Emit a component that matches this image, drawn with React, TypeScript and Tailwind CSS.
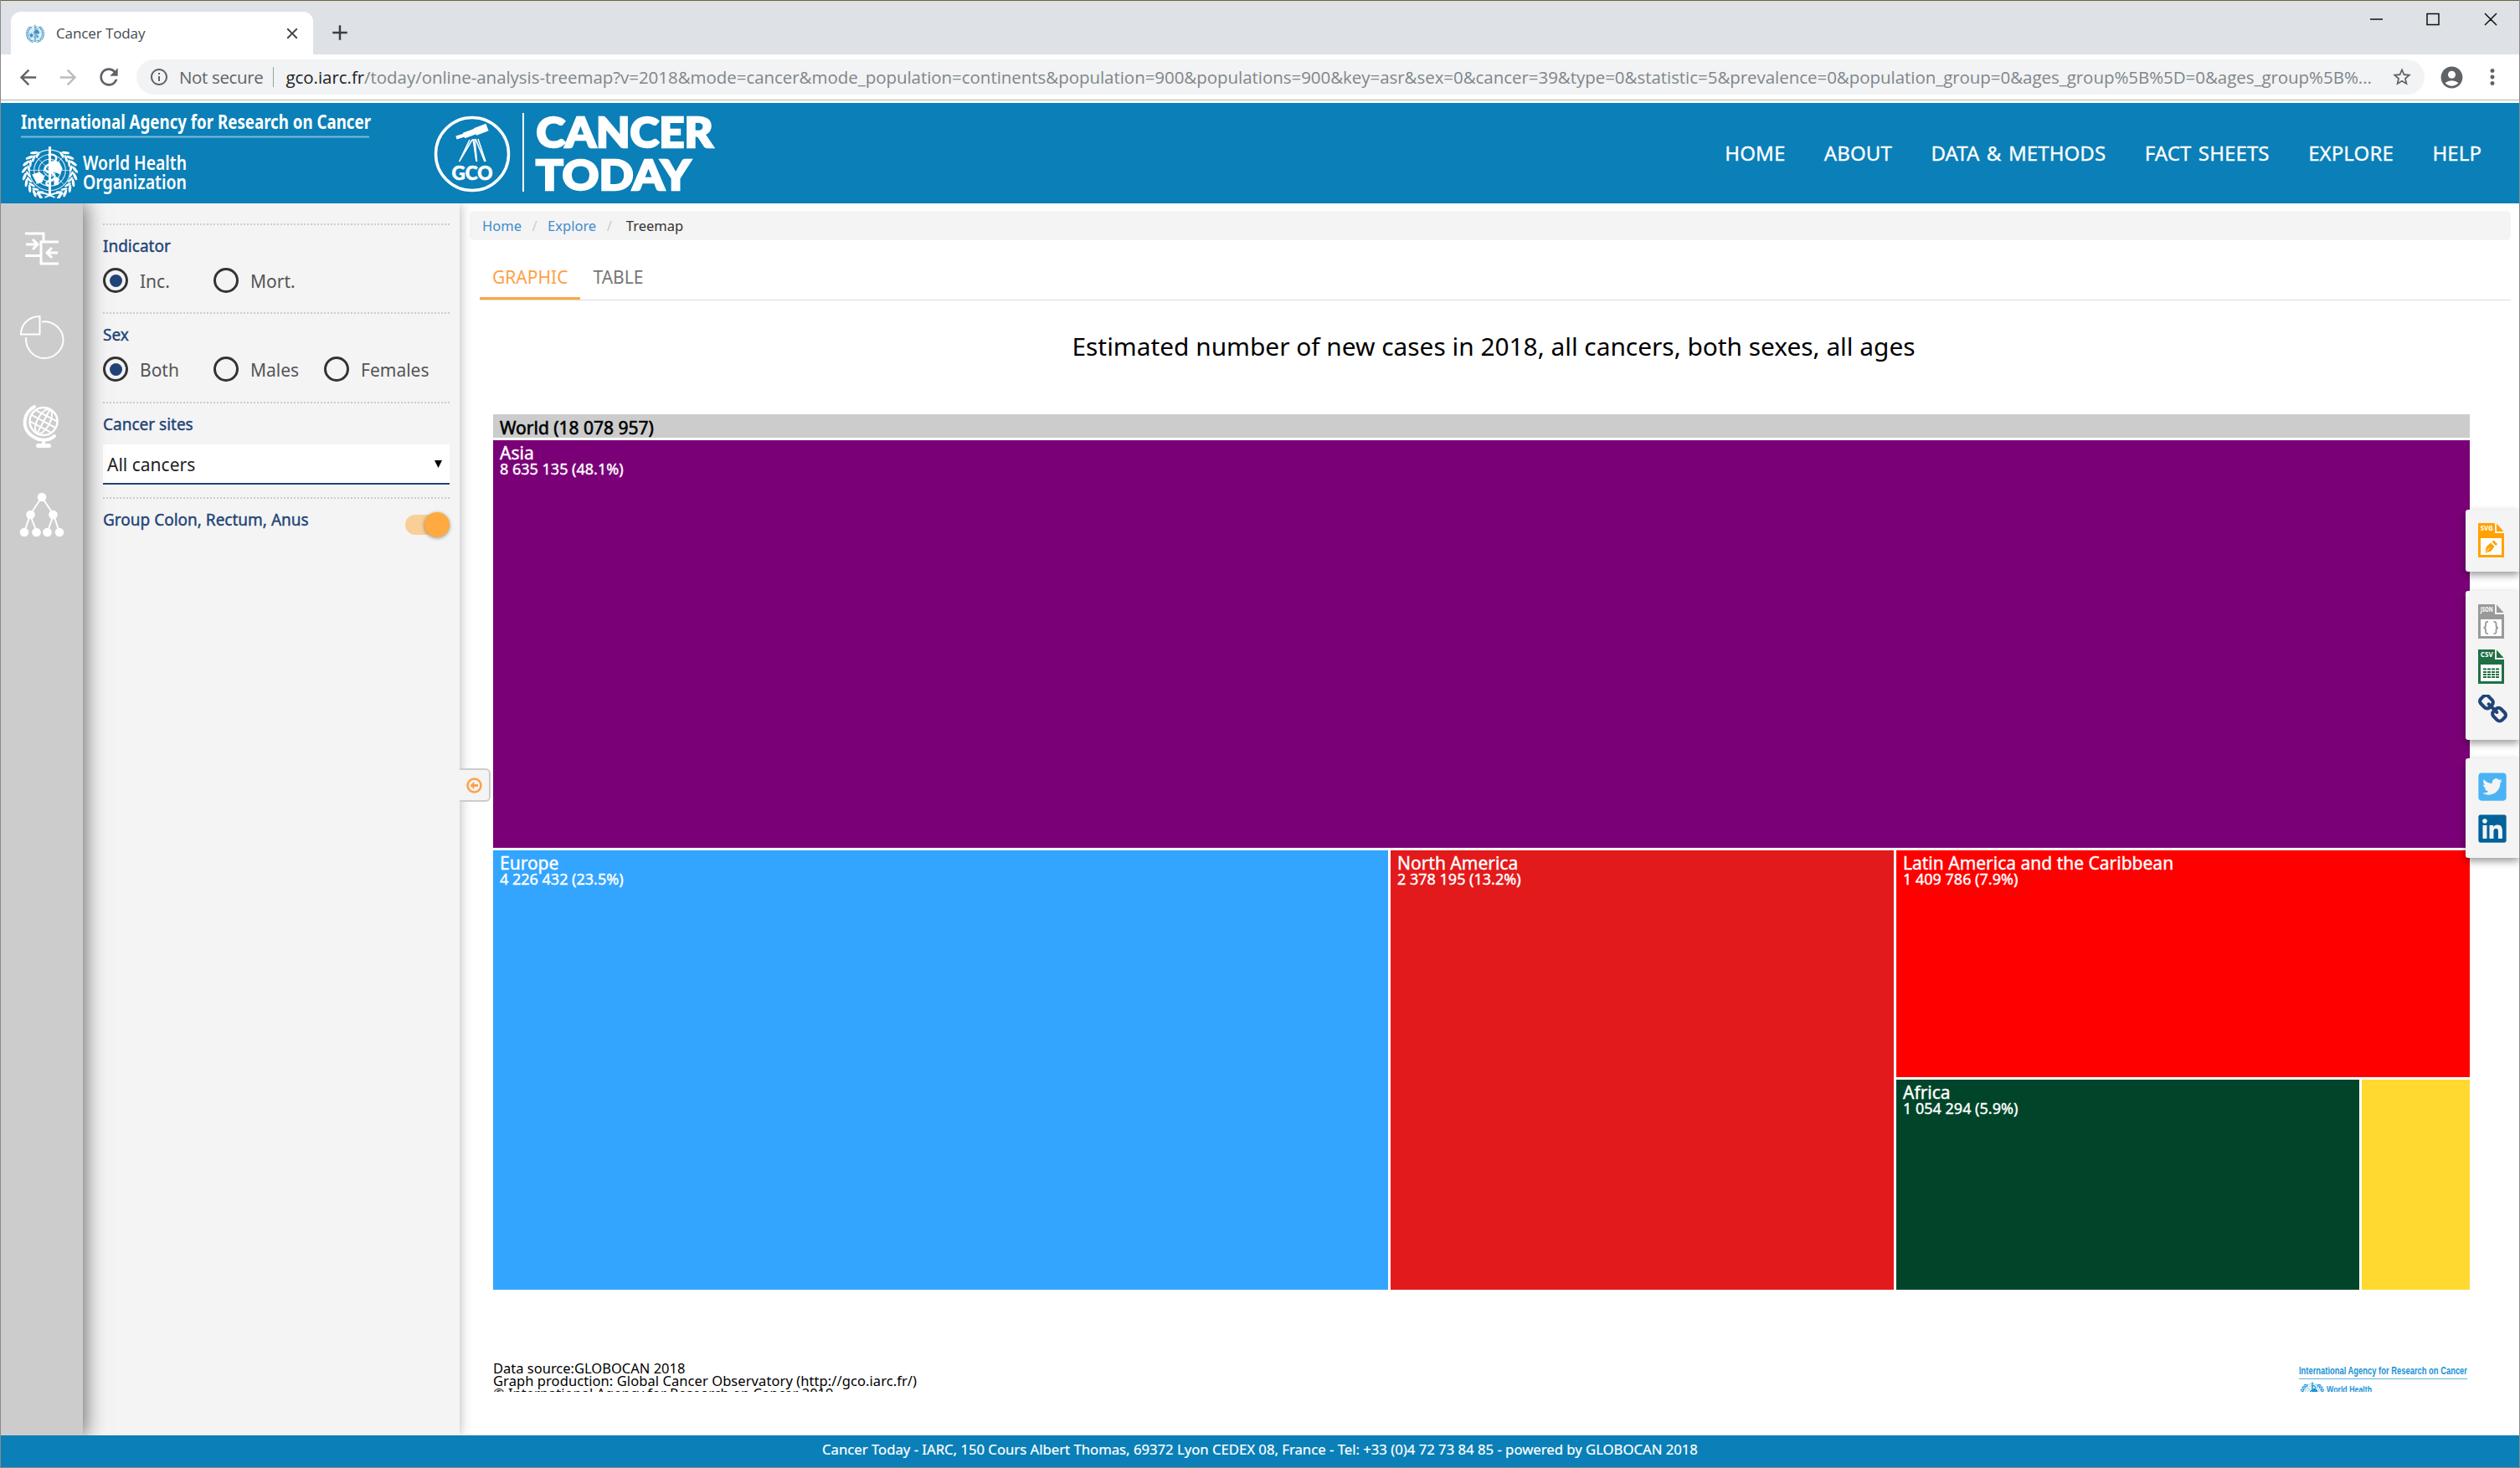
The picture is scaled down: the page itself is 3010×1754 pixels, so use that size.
import React from "react";
import { MdArrowBack, MdArrowForward, MdRefresh, MdStarBorder, MdAccountCircle, MdMoreVert, MdInfoOutline, MdClose, MdAdd } from "react-icons/md";
import { FaTwitterSquare, FaLinkedin } from "react-icons/fa";

const URL_PATH =
  "/today/online-analysis-treemap?v=2018&mode=cancer&mode_population=continents&population=900&populations=900&key=asr&sex=0&cancer=39&type=0&statistic=5&prevalence=0&population_group=0&ages_group%5B%5D=0&ages_group%5B%...";

function Emblem({ className }: { className: string }) {
  const leaves = Array.from({ length: 9 }, (_, i) => 38 + i * 15);
  return (
    <svg viewBox="-35 -32 70 62" className={className} fill="none" stroke="currentColor">
      {[7, 13, 18.5, 24].map((r) => (
        <circle key={r} r={r} cy="-3" strokeWidth="1.1" opacity="0.85" />
      ))}
      <path d="M-24 -3H24M-17 -20L17 14M17 -20L-17 14" strokeWidth="0.9" opacity="0.7" />
      <path d="M-21 2l9-3 6 5-3 7-6 2zM2-14l9 1 4 8-3 7-6-3-5 2-3-8zM5 5l6 1-1 8-5 1z" fill="currentColor" stroke="none" />
      <path d="M0 -31V26" strokeWidth="3" />
      <path d="M-2 -21C9 -24 11 -14 2 -11C-8 -8 -8 -2 1 0C8 2 7 8 0 9C-6 11 -5 15 1 16" strokeWidth="2.4" />
      {leaves.map((a) => (
        <g key={a}>
          <g transform={`rotate(${a}) translate(0 -30)`}>
            <ellipse rx="4.8" ry="1.6" transform="rotate(-32)" fill="currentColor" stroke="none" />
            <ellipse rx="4.2" ry="1.3" cy="5" transform="rotate(22)" fill="currentColor" stroke="none" />
          </g>
          <g transform={`rotate(${-a}) translate(0 -30)`}>
            <ellipse rx="4.8" ry="1.6" transform="rotate(32)" fill="currentColor" stroke="none" />
            <ellipse rx="4.2" ry="1.3" cy="5" transform="rotate(-22)" fill="currentColor" stroke="none" />
          </g>
        </g>
      ))}
      <path d="M-16 25C-8 22 -3 25 6 29M16 25C8 22 3 25 -6 29" strokeWidth="1.8" />
    </svg>
  );
}

function BrowserBar() {
  return (
    <div className="h-[123px] shrink-0 border-t border-[#6b6337] bg-white font-['Open_Sans','Noto_Sans',sans-serif]">
      <div className="flex h-16 bg-[#dee1e6]">
        <div className="mt-[13px] ml-3 flex h-[51px] w-[361px] items-center rounded-t-xl bg-white pr-[14px] pl-[17px] text-[#45494d]">
          <Emblem className="h-6 w-6 text-[#3c93c4]" />
          <span className="ml-[13px] text-[17px] tracking-[-0.1px]">Cancer Today</span>
          <MdClose className="ml-auto size-[22px] text-[#3c4043]" />
        </div>
        <MdAdd className="mt-[23px] ml-[17px] size-[30px] text-[#3c4043]" />
        <svg className="mt-3 mr-[23px] ml-auto h-[22px] w-[158px]" viewBox="0 0 158 22" fill="none" stroke="#111" strokeWidth="1.5">
          <path d="M3 10H18M71 3.500H85V16.500H71ZM140 3L154 17M154 3L140 17" />
        </svg>
      </div>
      <div className="flex h-[55px] items-center border-b border-[#b6b6b6] text-[#5f6368]">
        <MdArrowBack className="ml-[18px] size-[29px] shrink-0" />
        <MdArrowForward className="ml-[19px] size-[29px] shrink-0 text-[#babcbe]" />
        <MdRefresh className="ml-[18px] size-[32px] shrink-0" />
        <div className="ml-[17px] flex h-[42px] w-[2733px] shrink-0 items-center rounded-full bg-[#f1f3f4] pl-[15px] text-[20.5px] whitespace-nowrap">
          <MdInfoOutline className="size-6 shrink-0" />
          <span className="ml-3 tracking-[-0.35px]">Not secure</span>
          <span className="ml-3 h-6 w-px shrink-0 bg-[#9aa0a6]" />
          <span className="ml-[14px] tracking-[-0.045px] text-[#80868b]">
            <span className="text-[#202124]">gco.iarc.fr</span>
            {URL_PATH}
          </span>
          <MdStarBorder className="mr-[14px] ml-auto size-[26px] shrink-0" />
        </div>
        <MdAccountCircle className="ml-[17px] size-[31px] shrink-0" />
        <MdMoreVert className="ml-[18px] size-[30px] shrink-0" />
      </div>
    </div>
  );
}

const NAV = ["HOME", "ABOUT", "DATA & METHODS", "FACT SHEETS", "EXPLORE", "HELP"];

function Header() {
  return (
    <header className="relative z-20 flex h-[120px] shrink-0 items-center justify-between bg-[#0b7fb7] text-white">
      <svg className="h-[120px] w-[860px]" viewBox="1 123 860 120" fill="#fff">
        <text x="25" y="154" fontFamily="'Noto Sans',sans-serif" fontWeight="700" fontSize="24" textLength="418" lengthAdjust="spacingAndGlyphs">International Agency for Research on Cancer</text>
        <rect x="25" y="162.500" width="416" height="2" fill="#7dbbdb" />
        <svg x="24" y="174" width="71" height="63">
          <Emblem className="h-[63px] w-[71px]" />
        </svg>
        <g fontFamily="'Noto Sans',sans-serif" fontWeight="600" fontSize="23.500">
          <text x="99" y="203" textLength="124" lengthAdjust="spacingAndGlyphs">World Health</text>
          <text x="99" y="225.500" textLength="124" lengthAdjust="spacingAndGlyphs">Organization</text>
        </g>
        <circle cx="564" cy="184" r="43.500" fill="none" stroke="#fff" strokeWidth="3.500" />
        <g stroke="#fff" fill="none">
          <path d="M545 164.500L556 161" strokeWidth="4" />
          <path d="M554 162L569 156.500" strokeWidth="7" />
          <path d="M567.500 157.500L582 152" strokeWidth="9" />
          <path d="M561 167L548.500 193M564 167L548.500 193M565 166L569 193M567 166L569.500 193M568 166L579 193M571 166L580 193" strokeWidth="1.600" />
        </g>
        <text x="539.500" y="215" fontFamily="Lato,sans-serif" fontWeight="900" fontSize="22.500" stroke="#fff" strokeWidth="0.600" textLength="49" lengthAdjust="spacingAndGlyphs">GCO</text>
        <rect x="624" y="135" width="2" height="94" />
        <g fontFamily="Lato,sans-serif" fontWeight="900" fontSize="50" stroke="#fff" strokeWidth="2.400">
          <text x="640.500" y="176" textLength="211" lengthAdjust="spacingAndGlyphs">CANCER</text>
          <text x="640" y="226.500" textLength="185" lengthAdjust="spacingAndGlyphs">TODAY</text>
        </g>
      </svg>
      <nav className="mr-[45px] flex gap-[46.5px] text-[24px] tracking-[0.1px] [word-spacing:2px] [-webkit-text-stroke:0.3px]">
        {NAV.map((n) => (
          <span key={n}>{n}</span>
        ))}
      </nav>
    </header>
  );
}

function Rail() {
  return (
    <div className="relative z-10 w-[98px] shrink-0 bg-[#ccc] shadow-[0_0_24px_2px_rgba(0,0,0,0.6)]">
      <svg className="h-[420px] w-[98px]" viewBox="1 243 98 420" fill="none" stroke="#fff" strokeWidth="2.500">
        <path d="M30 279H52V290M30 305.500H48M70 289H49V315H70" strokeWidth="3" />
        <path d="M31 292H43M39 286L45 292L39 298M69 302H57M62 296L56 302L62 308" strokeWidth="3" />
        <path d="M47.500 378V399.500H25C25 387 35 378 47.500 378Z" strokeWidth="2" />
        <path d="M50 384.500C64 383 75 393 75.500 405C76 418 65 428 53 428C41 428 31 418 31 405V403" strokeWidth="2" />
        <circle cx="52" cy="503.500" r="16.500" strokeWidth="2.500" />
        <g strokeWidth="2">
          <g transform="rotate(28 52 503.500)">
            <ellipse cx="52" cy="503.500" rx="7.500" ry="16" />
            <path d="M52 487V520M36 503.500H68M38.500 496H65.500M38.500 511H65.500" />
          </g>
        </g>
        <path d="M41 486C28 493 26 510 36 519C45 527 57 528 65 521" strokeWidth="4" strokeLinecap="round" />
        <path d="M52 524V532" strokeWidth="4" />
        <rect x="43" y="530" width="18" height="5" rx="2.500" fill="#fff" stroke="none" />
        <path d="M50 594L36 615L29 636M36 615L44 636M50 594L64 615L56.500 636M64 615L71 636" strokeWidth="2" />
        <g fill="#fff" stroke="none">
          {[[50, 594], [36.5, 615], [63.5, 615], [29, 636], [43.5, 636], [56.5, 636], [71, 636]].map(([x, y]) => (
            <circle key={x} cx={x} cy={y} r="5.300" />
          ))}
        </g>
      </svg>
    </div>
  );
}

function Radio({ label, on }: { label: string; on?: boolean }) {
  return (
    <div className="flex h-[30px] w-[132px] items-center">
      <span className="grid size-[30px] shrink-0 place-items-center rounded-full border-3 border-[#333]">
        {on && <span className="size-[15px] rounded-full bg-[#1f4478]" />}
      </span>
      <span className="mt-0.5 ml-[14px] text-[21px] leading-[30px] text-[#555]">{label}</span>
    </div>
  );
}

function PanelLabel({ children }: { children: React.ReactNode }) {
  return <h2 className="h-6 text-[19px] leading-6 text-[#1f4478] [-webkit-text-stroke:0.4px]">{children}</h2>;
}

function Section({ label, height, children }: { label: string; height: string; children?: React.ReactNode }) {
  return (
    <section className={`${height} border-t-2 border-dotted border-[#ccc] pt-[13px]`}>
      <PanelLabel>{label}</PanelLabel>
      {children}
    </section>
  );
}

function FilterPanel() {
  return (
    <aside className="relative w-[450px] shrink-0 bg-[#f4f4f4] px-6 pt-6 pr-3 shadow-[0_0_14px_rgba(0,0,0,0.3)]">
      <Section label="Indicator" height="h-[106px]">
        <div className="mt-[14px] flex">
          <Radio label="Inc." on />
          <Radio label="Mort." />
        </div>
      </Section>
      <Section label="Sex" height="h-[107px]">
        <div className="mt-[14px] flex">
          <Radio label="Both" on />
          <Radio label="Males" />
          <Radio label="Females" />
        </div>
      </Section>
      <Section label="Cancer sites" height="h-[114px]">
        <div className="mt-3 flex h-12 items-center justify-between border-b-2 border-[#1f4478] bg-white pr-[9px] pl-[5px]">
          <span className="mt-0.5 text-[21px] leading-[30px] text-[#222]">All cancers</span>
          <svg className="h-[9px] w-[9px]" viewBox="0 0 9 9">
            <path d="M0 0H9L4.500 9Z" />
          </svg>
        </div>
      </Section>
      <div className="flex justify-between border-t-2 border-dotted border-[#ccc] pt-[13px]">
        <PanelLabel>Group Colon, Rectum, Anus</PanelLabel>
        <div className="mt-[6px] flex h-[24px] w-[53px] items-center justify-end rounded-full bg-[#f9cf98]">
          <span className="size-[30px] rounded-full bg-[#ffaa40] shadow-[0_1px_4px_rgba(0,0,0,0.4)]" />
        </div>
      </div>
      <div className="absolute top-[675px] left-[450px] grid h-10 w-[37px] place-items-center rounded-r-md border-2 border-l-0 border-[#ccc] bg-[#f4f4f4]">
        <svg className="size-[19px]" viewBox="0 0 19 19">
          <circle cx="9.500" cy="9.500" r="8" fill="none" stroke="#ffa048" strokeWidth="2.600" />
          <path d="M4.500 9.500L9.300 4.800V8H14V11H9.300V14.200Z" fill="#ffa048" />
        </svg>
      </div>
    </aside>
  );
}

function Tile({ name, value, className }: { name?: string; value?: string; className: string }) {
  return (
    <div className={`pt-[5px] pl-2 whitespace-nowrap text-white [-webkit-text-stroke:0.4px] ${className}`}>
      <div className="text-[21px] leading-5">{name}</div>
      <div className="text-[18px] leading-[18px]">{value}</div>
    </div>
  );
}

function Treemap() {
  return (
    <div className="mt-[61px] ml-7 flex w-[2361px] flex-col gap-[3px]">
      <div className="h-7 bg-[#ccc] pl-2 text-[21px] leading-[32px] text-black [-webkit-text-stroke:0.6px]">World (18 078 957)</div>
      <Tile name="Asia" value="8 635 135 (48.1%)" className="h-[487px] bg-[#7a0077]" />
      <div className="flex h-[525px] gap-[3px]">
        <Tile name="Europe" value="4 226 432 (23.5%)" className="w-[1069px] bg-[#34a5ff]" />
        <Tile name="North America" value="2 378 195 (13.2%)" className="w-[601px] bg-[#e31a1c]" />
        <div className="flex w-[685px] flex-col gap-[3px]">
          <Tile name="Latin America and the Caribbean" value="1 409 786 (7.9%)" className="h-[271px] bg-[#ff0000]" />
          <div className="flex h-[251px] gap-[3px]">
            <Tile name="Africa" value="1 054 294 (5.9%)" className="w-[553px] bg-[#004529]" />
            <Tile className="w-[129px] bg-[#ffd92f]" />
          </div>
        </div>
      </div>
    </div>
  );
}

function FileIcon({ label, color, children }: { label: string; color: string; children: React.ReactNode }) {
  return (
    <svg className="h-[41px] w-[31px] shrink-0" viewBox="0 0 31 41">
      <path d="M0 0H20V12H31V41H0Z" fill={color} />
      <path d="M22 0.500L30.500 10H22Z" fill={color} />
      <rect x="3" y="18" width="25" height="20" fill="#fff" />
      <text x="2.700" y="8.800" fontFamily="'Open Sans',sans-serif" fontWeight="700" fontSize="8.500" fill="#fff" textLength="15" lengthAdjust="spacingAndGlyphs">{label}</text>
      {children}
    </svg>
  );
}

function Card({ className, children }: { className: string; children: React.ReactNode }) {
  return (
    <div className={`flex w-16 flex-col rounded-l-[3px] bg-[#f4f4f4] pl-[15px] shadow-[0_4px_10px_rgba(0,0,0,0.4)] ${className}`}>{children}</div>
  );
}

function SideTools() {
  return (
    <div className="absolute top-[366px] right-0 flex flex-col">
      <Card className="h-[74px] pt-4">
        <FileIcon label="SVG" color="#ffa200">
          <path d="M8 36L10 28L15 23.500L19.500 28L15.500 33.500Z" fill="#ffa200" />
          <path d="M16.500 22L18.500 20.500L23 25L21 27Z" fill="#ffa200" />
          <path d="M8 36L14 29.500" stroke="#fff" strokeWidth="1" />
        </FileIcon>
      </Card>
      <Card className="mt-[23px] h-[178px] pt-4">
        <FileIcon label="JSON" color="#999">
          <path d="M12 21C8.500 20.500 9 23 9 25C9 27 8.500 28 6.500 28C8.500 28 9 29 9 31C9 33.500 8.500 35.500 12 35M18.500 21C22 20.500 21.500 23 21.500 25C21.500 27 22 28 24 28C22 28 21.500 29 21.500 31C21.500 33.500 22 35.500 18.500 35" fill="none" stroke="#999" strokeWidth="1.800" />
        </FileIcon>
        <div className="h-[13px] shrink-0" />
        <FileIcon label="CSV" color="#1f7044">
          <path d="M6 23.500H25M6 27H25M6 30H25M6 33H25" stroke="#1f7044" strokeWidth="2" strokeDasharray="4 1" />
        </FileIcon>
        <svg className="mt-[13px] size-[35px] shrink-0" viewBox="79 79 1634 1634" fill="#1f4478">
          <path d="M1520 1216q0-40-28-68l-208-208q-28-28-68-28-42 0-72 32 3 3 19 18.500t21.500 21.500 15 19 13 25.500 3.500 27.500q0 40-28 68t-68 28q-15 0-27.500-3.500t-25.500-13-19-15-21.500-21.500-18.500-19q-33 31-33 73 0 40 28 68l206 207q27 27 68 27 40 0 68-26l147-146q28-28 28-67zm-703-705q0-40-28-68l-206-207q-28-28-68-28-39 0-68 27l-147 146q-28 28-28 67 0 40 28 68l208 208q27 27 68 27 42 0 72-31-3-3-19-18.500t-21.500-21.500-15-19-13-25.500-3.500-27.500q0-40 28-68t68-28q15 0 27.500 3.500t25.500 13 19 15 21.500 21.500 18.500 19q33-31 33-73zm895 705q0 120-85 203l-147 146q-83 83-203 83-121 0-204-85l-206-207q-83-83-83-203 0-123 88-209l-88-88q-86 88-208 88-120 0-204-84l-208-208q-84-84-84-204t85-203l147-146q83-83 203-83 121 0 204 85l206 207q83 83 83 203 0 123-88 209l88 88q86-88 208-88 120 0 204 84l208 208q84 84 84 204z" />
        </svg>
      </Card>
      <Card className="mt-[22px] h-[119px] pt-[15px]">
        <FaTwitterSquare className="-ml-[2.5px] size-[38px] shrink-0 text-[#4ab3f4]" />
        <FaLinkedin className="mt-3 -ml-[2.5px] size-[38px] shrink-0 text-[#00629b]" />
      </Card>
    </div>
  );
}

function Main() {
  return (
    <main className="min-w-0 flex-1 px-3 pt-[9px] pr-[10px]">
      <div className="flex h-[35px] items-center rounded-md bg-[#f4f4f4] pl-[15px] text-[16.5px] leading-[35px] text-[#428bca]">
        <span>Home</span>
        <span className="mx-[12.5px] text-[#ccc]">/</span>
        <span>Explore</span>
        <span className="mr-[17px] ml-[12.5px] text-[#ccc]">/</span>
        <span className="text-[#333]">Treemap</span>
      </div>
      <div className="mt-[17px] ml-3 flex h-[55px] border-b border-[#ddd] text-[21px] leading-[55px]">
        <div className="h-[54px] border-b-3 border-[#ffa640] px-[15px] text-[#ffa048]">GRAPHIC</div>
        <div className="px-[15px] text-[#777]">TABLE</div>
      </div>
      <h1 className="mt-[34px] ml-[13px] h-[41px] w-[2420px] text-center text-[29.85px] leading-[42px] text-black">Estimated number of new cases in 2018, all cancers, both sexes, all ages</h1>
      <Treemap />
      <div className="mt-[85px] ml-7 flex h-[37px] w-[2361px] justify-between overflow-hidden text-[16.5px] leading-[15px] text-black">
        <div className="pt-px whitespace-nowrap">
          <div>Data source:GLOBOCAN 2018</div>
          <div className="tracking-[0.075px]">Graph production: Global Cancer Observatory (http://gco.iarc.fr/)</div>
          <div>© International Agency for Research on Cancer 2019</div>
        </div>
        <svg className="h-[60px] w-[204px] shrink-0 text-[#1b93d6]" viewBox="2746 1626 204 60">
          <g fontFamily="'Liberation Sans',sans-serif" fontWeight="700" fontSize="12" fill="#1b93d6">
            <text x="2746" y="1642" textLength="201" lengthAdjust="spacingAndGlyphs">International Agency for Research on Cancer</text>
            <text x="2779" y="1664" fontSize="11" textLength="54" lengthAdjust="spacingAndGlyphs">World Health</text>
          </g>
          <rect x="2746" y="1647" width="201" height="1" fill="#5cb2e2" />
          <svg x="2746" y="1651" width="32" height="28">
            <Emblem className="h-[28px] w-[32px]" />
          </svg>
        </svg>
      </div>
    </main>
  );
}

export default function App() {
  return (
    <div className="relative flex h-[1754px] w-[3010px] flex-col overflow-hidden border-x border-b border-[#8a8a8a] bg-white font-['Noto_Sans','Open_Sans',sans-serif]">
      <BrowserBar />
      <Header />
      <div className="relative flex min-h-0 flex-1">
        <Rail />
        <FilterPanel />
        <Main />
        <SideTools />
      </div>
      <footer className="relative z-20 h-[38px] shrink-0 bg-[#0b7fb7] text-center text-[16.7px] leading-[33px] text-white [-webkit-text-stroke:0.2px]">
        Cancer Today - IARC, 150 Cours Albert Thomas, 69372 Lyon CEDEX 08, France - Tel: +33 (0)4 72 73 84 85 - powered by GLOBOCAN 2018
      </footer>
    </div>
  );
}
